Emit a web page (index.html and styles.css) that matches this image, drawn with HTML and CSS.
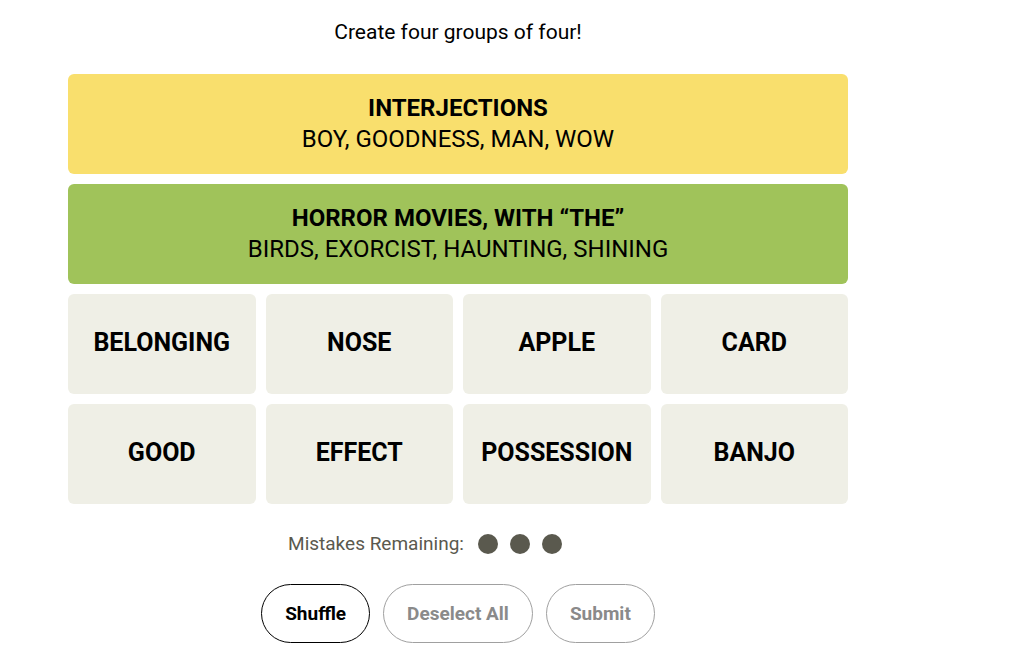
FILE: index.html
```html
<!DOCTYPE html>
<html lang="en">
<head>
  <meta charset="UTF-8">
  <meta name="viewport" content="width=device-width, initial-scale=1.0">
  <title>Connections</title>
  <link rel="stylesheet" href="styles.css">
</head>
<body>
  <div id="game">
    <p class="prompt">Create four groups of four!</p>

    <div class="board">
      <div class="solved yellow">
        <h3>INTERJECTIONS</h3>
        <p>BOY, GOODNESS, MAN, WOW</p>
      </div>
      <div class="solved green">
        <h3>HORROR MOVIES, WITH &ldquo;THE&rdquo;</h3>
        <p>BIRDS, EXORCIST, HAUNTING, SHINING</p>
      </div>
      <div class="tiles">
        <button class="tile">BELONGING</button>
        <button class="tile">NOSE</button>
        <button class="tile">APPLE</button>
        <button class="tile">CARD</button>
        <button class="tile">GOOD</button>
        <button class="tile">EFFECT</button>
        <button class="tile">POSSESSION</button>
        <button class="tile">BANJO</button>
      </div>
    </div>

    <div class="mistakes">
      <span>Mistakes Remaining:</span>
      <span class="dot"></span>
      <span class="dot"></span>
      <span class="dot"></span>
      <span class="dot used"></span>
    </div>

    <div class="controls">
      <button class="pill active">Shuffle</button>
      <button class="pill" disabled>Deselect All</button>
      <button class="pill" disabled>Submit</button>
    </div>
  </div>
</body>
</html>
```

FILE: styles.css
```css
body {
  margin: 0;
  background-color: #fff;
  font-family: 'Roboto', 'Liberation Sans', sans-serif;
  color: #000;
}

#game {
  width: 780px;
  margin-left: 68px;
  display: flex;
  flex-direction: column;
  align-items: center;
}

.prompt {
  margin: 19px 0 0;
  font-size: 21px;
  line-height: 26px;
}

.board {
  width: 100%;
  margin-top: 29px;
  display: flex;
  flex-direction: column;
  gap: 10px;
}

.solved {
  height: 100px;
  border-radius: 6px;
  display: flex;
  flex-direction: column;
  align-items: center;
  justify-content: center;
  font-size: 24px;
}

.solved h3 {
  margin: 0;
  font-size: 24px;
  font-weight: 700;
  line-height: 31px;
}

.solved p {
  margin: 0;
  line-height: 31px;
}

.yellow {
  background-color: #f9df6d;
}

.green {
  background-color: #a0c35a;
}

.tiles {
  display: grid;
  grid-template-columns: repeat(4, 1fr);
  gap: 10px;
}

.tile {
  height: 100px;
  padding: 0 0 4px;
  border: none;
  border-radius: 6px;
  background-color: #efefe6;
  font-family: inherit;
  font-size: 25px;
  font-weight: 700;
  color: #000;
  cursor: pointer;
}

.mistakes {
  margin-top: 28px;
  margin-right: 34px;
  display: flex;
  align-items: center;
  gap: 12px;
  font-size: 19px;
  color: #5a594e;
}

.mistakes span:first-child {
  margin-right: 2px;
}

.dot {
  width: 20px;
  height: 20px;
  border-radius: 50%;
  background-color: #5a594e;
}

/* a spent mistake keeps its slot */
.dot.used {
  visibility: hidden;
}

.controls {
  margin-top: 29px;
  display: flex;
  gap: 13px;
}

.pill {
  height: 59px;
  padding: 0 23px;
  border: 1px solid #a0a0a0;
  border-radius: 30px;
  background-color: #fff;
  font-family: inherit;
  font-size: 19px;
  font-weight: 700;
  color: #8a8a8a;
}

.pill.active {
  border-color: #000;
  color: #000;
  cursor: pointer;
}
```
